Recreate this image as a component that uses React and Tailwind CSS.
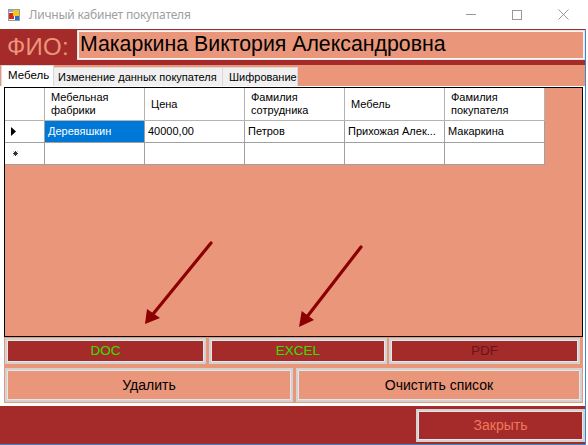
import React from "react";

const headers = [
  ["Мебельная", "фабрики"],
  ["Цена"],
  ["Фамилия", "сотрудника"],
  ["Мебель"],
  ["Фамилия", "покупателя"],
];

const row1 = ["Деревяшкин", "40000,00", "Петров", "Прихожая Алек...", "Макаркина"];

function AppIcon() {
  return (
    <svg width="12" height="12" viewBox="0 0 12 12">
      <rect x="0.5" y="0.5" width="11" height="11" fill="#f4f4f4" stroke="#9a9a9a" />
      <rect x="1" y="4" width="5" height="6" fill="#d42a1e" />
      <rect x="5" y="1" width="6" height="6" fill="#f2c521" />
      <rect x="7" y="7" width="4" height="4" fill="#2d6fd0" />
      <rect x="1" y="1" width="4" height="2" fill="#8aa8d8" />
    </svg>
  );
}

function WinButton({ w, h, bg, color, children, size }) {
  return (
    <div
      className={`flex items-center justify-center border-2 border-[#d2d2d2] shadow-[inset_0_0_0_1px_#e6e6e6] ${bg} ${color} ${size}`}
      style={{ width: w, height: h }}
    >
      {children}
    </div>
  );
}

export default function App() {
  return (
    <div className="relative w-[588px] h-[445px] bg-white overflow-hidden font-['Liberation_Sans',Arial,sans-serif]">
      {/* Title bar */}
      <div className="flex h-[29px] w-[586px] items-center">
        <div className="ml-[8px] flex items-center">
          <AppIcon />
        </div>
        <div className="ml-[9px] text-[12px] text-[#a0a0a0] font-['Noto_Sans',sans-serif] tracking-[-0.2px]">
          Личный кабинет покупателя
        </div>
        <div className="ml-auto flex h-full">
          <div className="flex w-[46px] items-center justify-center">
            <div className="h-px w-[10px] bg-[#999]" />
          </div>
          <div className="flex w-[46px] items-center justify-center">
            <div className="h-[10px] w-[10px] border border-[#999]" />
          </div>
          <div className="flex w-[46px] items-center justify-center">
            <svg width="11" height="11" viewBox="0 0 11 11">
              <path d="M0.5 0.5 L10.5 10.5 M10.5 0.5 L0.5 10.5" stroke="#999" strokeWidth="1" />
            </svg>
          </div>
        </div>
      </div>

      {/* Body */}
      <div className="flex w-[586px] flex-col border-r border-b border-[#3d86c6]">
        {/* Header band */}
        <div className="flex h-[36px] bg-[#a52a2a]">
          <div className="ml-[7px] mt-[3px] w-[70px] text-[24px] leading-[30px] tracking-[0.3px] text-[#e9967a]">ФИО:</div>
          <div className="mt-[1px] flex h-[30px] w-[508px] items-center whitespace-nowrap border border-[#e4e4e4] bg-[#e9967a] pl-[2px] text-[21.3px] text-black shadow-[inset_0_0_0_1px_#f4f4f4]">
            Макаркина Виктория Александровна
          </div>
        </div>

        {/* Tab strip */}
        <div className="flex h-[21px] items-end whitespace-nowrap bg-[#e9967a] pl-[1px] text-[11px] text-black">
          <div className="flex h-[21px] w-[53px] items-center border border-b-0 border-[#d9d9d9] bg-white pl-[6px] text-[11.5px]">
            Мебель
          </div>
          <div className="flex h-[19px] w-[169px] items-center overflow-hidden border border-b-0 border-l-0 border-[#d9d9d9] bg-[#f0f0f0] pl-[4px]">
            Изменение данных покупателя
          </div>
          <div className="flex h-[19px] w-[75px] items-center border border-b-0 border-l-0 border-[#d9d9d9] bg-[#f0f0f0] pl-[6px]">
            Шифрование
          </div>
        </div>

        {/* Tab page */}
        <div className="flex h-[320px] flex-col bg-white pl-[4px] pr-[2px] pt-[1px] pb-[3px]">
          {/* DataGrid */}
          <div className="h-[250px] border border-black bg-[#e9967a]">
            <div className="grid w-[540px] grid-cols-[40px_100px_100px_100px_100px_100px] text-[11px] text-black">
              {/* header row */}
              <div className="h-[33px] border-r border-b border-[#b4b4b4] bg-white" />
              {headers.map((h, i) => (
                <div
                  key={i}
                  className="flex h-[33px] flex-col justify-center border-r border-b border-[#b4b4b4] bg-white pl-[6px] leading-[13px]"
                >
                  {h.map((l, j) => (
                    <span key={j}>{l}</span>
                  ))}
                </div>
              ))}
              {/* row 1 */}
              <div className="flex h-[22px] items-center border-r border-b border-[#a0a0a0] bg-white pl-[6px]">
                <svg width="5" height="9" viewBox="0 0 5 9">
                  <path d="M0 0 L5 4.5 L0 9 Z" fill="#000" />
                </svg>
              </div>
              {row1.map((v, i) => (
                <div
                  key={i}
                  className={`flex h-[22px] items-center whitespace-nowrap border-r border-b border-[#a0a0a0] pl-[3px] ${
                    i === 0 ? "bg-[#0078d7] text-white" : "bg-white"
                  }`}
                >
                  {v}
                </div>
              ))}
              {/* row 2 */}
              <div className="flex h-[22px] items-center border-r border-b border-[#a0a0a0] bg-white pl-[8px]">
                <svg width="5" height="5" viewBox="0 0 5 5">
                  <path d="M2.5 0 V5 M0 2.5 H5 M0.7 0.7 L4.3 4.3 M4.3 0.7 L0.7 4.3" stroke="#333" strokeWidth="1" />
                </svg>
              </div>
              {[0, 1, 2, 3, 4].map((i) => (
                <div key={i} className="h-[22px] border-r border-b border-[#a0a0a0] bg-white" />
              ))}
            </div>
          </div>

          {/* Button panel */}
          <div className="flex h-[66px] flex-col gap-[4px] bg-[#e9967a] pl-[1px] pt-[1px]">
            <div className="flex">
              <WinButton w={201} h={26} bg="bg-[#a52a2a]" color="text-[#33e000]" size="text-[13.5px]">
                DOC
              </WinButton>
              <div className="w-[3px]" />
              <WinButton w={178} h={26} bg="bg-[#a52a2a]" color="text-[#33e000]" size="text-[13.5px]">
                EXCEL
              </WinButton>
              <div className="w-[2px]" />
              <WinButton w={191} h={26} bg="bg-[#a52a2a]" color="text-[#6a1616]" size="text-[13.5px]">
                PDF
              </WinButton>
            </div>
            <div className="flex">
              <WinButton w={288} h={34} bg="bg-[#e9967a]" color="text-black" size="text-[14px]">
                Удалить
              </WinButton>
              <div className="w-[3px]" />
              <WinButton w={286} h={34} bg="bg-[#e9967a]" color="text-black" size="text-[14px]">
                Очистить список
              </WinButton>
            </div>
          </div>
        </div>

        {/* Bottom band */}
        <div className="flex h-[38px] justify-end bg-[#a52a2a] pt-[3px]">
          <WinButton w={169} h={33} bg="bg-[#a52a2a]" color="text-[#f0795c]" size="text-[14px]">
            Закрыть
          </WinButton>
        </div>
      </div>

      {/* Arrows overlay */}
      <svg className="pointer-events-none absolute left-0 top-0" width="588" height="445">
        <line x1="211" y1="243" x2="153.5" y2="313.5" stroke="#8b0000" strokeWidth="3.2" strokeLinecap="round" />
        <path d="M145 324 L147 309 L160 318 Z" fill="#8b0000" />
        <line x1="361" y1="247" x2="308" y2="315.5" stroke="#8b0000" strokeWidth="3.2" strokeLinecap="round" />
        <path d="M299 327 L301.7 311 L314 320 Z" fill="#8b0000" />
      </svg>
    </div>
  );
}
